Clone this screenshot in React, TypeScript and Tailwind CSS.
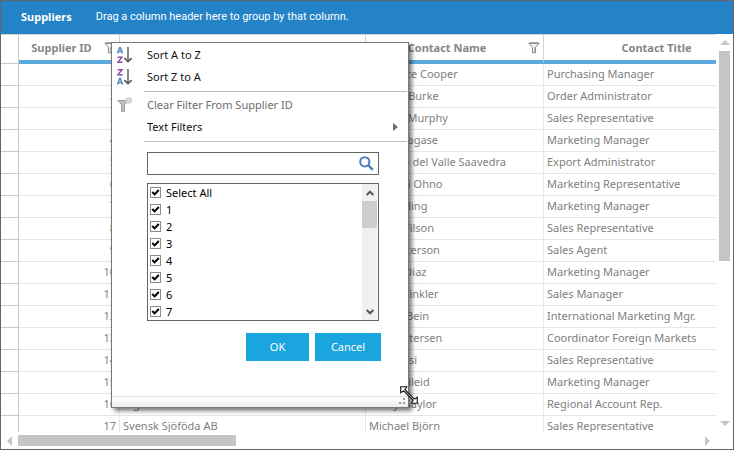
import React from "react";

type Supplier = { id: number; company?: string; contact: string; title: string };

const suppliers: Supplier[] = [
  { id: 1, contact: "Charlotte Cooper", title: "Purchasing Manager" },
  { id: 2, contact: "Shelley Burke", title: "Order Administrator" },
  { id: 3, contact: "Regina Murphy", title: "Sales Representative" },
  { id: 4, contact: "Yoshi Nagase", title: "Marketing Manager" },
  { id: 5, contact: "Antonio del Valle Saavedra", title: "Export Administrator" },
  { id: 6, contact: "Mayumi Ohno", title: "Marketing Representative" },
  { id: 7, contact: "Ian Devling", title: "Marketing Manager" },
  { id: 8, contact: "Peter Wilson", title: "Sales Representative" },
  { id: 9, contact: "Lars Peterson", title: "Sales Agent" },
  { id: 10, contact: "Carlos Diaz", title: "Marketing Manager" },
  { id: 11, contact: "Petra Winkler", title: "Sales Manager" },
  { id: 12, contact: "Martin Bein", title: "International Marketing Mgr." },
  { id: 13, contact: "Sven Petersen", title: "Coordinator Foreign Markets" },
  { id: 14, contact: "Elio Rossi", title: "Sales Representative" },
  { id: 15, contact: "Beate Vileid", title: "Marketing Manager" },
  { id: 16, company: "Bigfoot Breweries", contact: "Cheryl Saylor", title: "Regional Account Rep." },
  { id: 17, company: "Svensk Sjöföda AB", contact: "Michael Björn", title: "Sales Representative" },
];

function FunnelIcon() {
  return (
    <svg width="12" height="12" viewBox="0 0 12 12" fill="none" aria-hidden="true">
      <path d="M.8 1.2H11.2L7.5 5.3V10.8H4.5V5.3Z" fill="#f4f4f6" stroke="#85858f" />
      <path d="M2 1H10" stroke="#74747f" />
      <path d="M6.7 5V10.5" stroke="#a5a5ad" />
    </svg>
  );
}

function SortIcon({ descending = false }: { descending?: boolean }) {
  const a = "M.5 6.5L2.7 .5H3.3L5.5 6.5M1.4 4.6H4.6";
  const z = "M.6 .7H5L.8 5.8H5.5";
  return (
    <svg width="16" height="17" viewBox="0 0 16 17" fill="none" aria-hidden="true">
      <g transform={descending ? "translate(0 9)" : "translate(0 0)"}>
        <path d={a} stroke="#4a83bb" strokeWidth="1.4" />
      </g>
      <g transform={descending ? "translate(0 0)" : "translate(0 9.5)"}>
        <path d={z} stroke="#8b4aa5" strokeWidth="1.4" />
      </g>
      <path d="M11 0V14" stroke="#8a8a8a" strokeWidth="2" />
      <path d="M7.4 11.2L11 14.6L14.6 11.2" stroke="#5c5c5c" strokeWidth="1.8" />
    </svg>
  );
}

function ClearFilterIcon() {
  return (
    <svg width="16" height="16" viewBox="0 0 16 16" fill="none" aria-hidden="true">
      <path d="M.8 3.4H11.2L7.5 7.6V14.4H4.6V7.6Z" fill="#c0c0c0" stroke="#9c9c9c" />
      <circle cx="11.8" cy="3.4" r="3.2" fill="#d0d0d0" />
      <path d="M10.6 2.2L13 4.6M13 2.2L10.6 4.6" stroke="#e4e4e4" />
    </svg>
  );
}

function Triangle({ d, w, h, color }: { d: string; w: number; h: number; color: string }) {
  return (
    <svg width={w} height={h} viewBox={`0 0 ${w} ${h}`} aria-hidden="true">
      <path d={d} fill={color} />
    </svg>
  );
}

function HeaderCell({ label }: { label?: string }) {
  return (
    <th className="h-[29px] border-r border-b-4 border-r-[#d4d4d4] border-b-[#5baadd] p-0 pr-[3px]">
      <div className="flex items-center">
        <span className="flex-1 text-center font-bold text-[#868686]">{label}</span>
        <button type="button" aria-label="Filter column">
          <FunnelIcon />
        </button>
      </div>
    </th>
  );
}

function SupplierTable() {
  const cell = "h-[22px] overflow-hidden border-r border-b border-[#e6e6e6] px-[3px] pt-0 pb-[2px] whitespace-nowrap";
  return (
    <table className="w-[784px] table-fixed border-separate border-spacing-0 text-[11px] leading-4 text-[#808080]">
      <colgroup>
        <col className="w-[18px]" />
        <col className="w-[101px]" />
        <col className="w-[246px]" />
        <col className="w-[178px]" />
        <col />
      </colgroup>
      <thead>
        <tr>
          <td className="border-r border-b border-[#c8c8c8] p-0" />
          <HeaderCell label="Supplier ID" />
          <HeaderCell />
          <HeaderCell label="Contact Name" />
          <HeaderCell label="Contact Title" />
        </tr>
      </thead>
      <tbody>
        {suppliers.map((s) => (
          <tr key={s.id}>
            <td className="h-[22px] border-r border-b border-[#c8c8c8] p-0" />
            <td className={`${cell} text-right`}>{s.id}</td>
            <td className={cell}>{s.company}</td>
            <td className={cell}>{s.contact}</td>
            <td className={cell}>{s.title}</td>
          </tr>
        ))}
      </tbody>
    </table>
  );
}

function FilterOption({ label }: { label: string }) {
  return (
    <label className="flex h-[17px] items-center gap-[5px] pl-[2px]">
      <span className="grid">
        <input
          type="checkbox"
          defaultChecked
          className="peer col-start-1 row-start-1 size-[11px] appearance-none border border-[#8c8c8c] bg-white"
        />
        <svg
          className="pointer-events-none invisible col-start-1 row-start-1 peer-checked:visible"
          width="11"
          height="11"
          viewBox="0 0 11 11"
          fill="none"
          aria-hidden="true"
        >
          <path d="M2.3 5L4.6 7.4L8.8 3" stroke="#000" strokeWidth="2" />
        </svg>
      </span>
      {label}
    </label>
  );
}

function ResizeCursor() {
  return (
    <svg className="absolute -right-[10px] bottom-[3px]" width="18" height="18" viewBox="0 0 18 18" aria-hidden="true">
      <path
        d="M.7 .7H6.8L4.9 3.6L14.4 13.1L17.3 11.2V17.3H11.2L13.1 14.4L3.6 4.9L.7 6.8Z"
        fill="#fff"
        stroke="#111"
        strokeWidth="1.1"
      />
      <path d="M5 5L13 13" stroke="#777" strokeWidth=".6" />
    </svg>
  );
}

function FilterMenu() {
  const item = "flex h-[22px] w-full items-center text-left";
  return (
    <div
      role="dialog"
      aria-label="Filter Supplier ID"
      className="absolute top-[41px] left-[110px] flex h-[366px] w-[298px] flex-col border border-[#777] bg-white text-[11px] leading-4 text-[#111] shadow-[3px_3px_4px_rgba(0,0,0,0.5)]"
    >
      <div className="pt-px">
        <button type="button" className={item}>
          <span className="w-[35px] pl-[5px]"><SortIcon /></span>
          Sort A to Z
        </button>
        <button type="button" className={item}>
          <span className="w-[35px] pl-[5px]"><SortIcon descending /></span>
          Sort Z to A
        </button>
      </div>
      <hr className="mt-[3px] mr-px mb-[2px] ml-8 border-[#bdbdbd]" />
      <button type="button" className={`${item} text-[#6d6d6d]`}>
        <span className="w-[35px] pl-[5px]"><ClearFilterIcon /></span>
        Clear Filter From Supplier ID
      </button>
      <button type="button" className={`${item} justify-between pr-[10px] pl-[35px]`}>
        Text Filters
        <Triangle w={5} h={8} d="M0 0L5 4L0 8Z" color="#6d6d6d" />
      </button>
      <hr className="mt-[3px] mr-px ml-8 border-[#bdbdbd]" />

      <div className="mt-[10px] mr-[29px] ml-[35px] flex h-[23px] items-center border border-[#666]">
        <input type="text" aria-label="Search" className="h-full min-w-0 flex-1 px-1 outline-none" />
        <button type="button" aria-label="Search values" className="pr-1">
          <svg width="15" height="15" viewBox="0 0 15 15" fill="none" aria-hidden="true">
            <circle cx="5.8" cy="5.8" r="4.6" stroke="#4a7fb8" strokeWidth="2" />
            <path d="M9 9L13.8 13.8" stroke="#4a7fb8" strokeWidth="2.4" />
          </svg>
        </button>
      </div>

      <div className="mt-2 mr-[29px] ml-[35px] flex h-[138px] border border-[#666] text-black">
        <div className="flex-1 overflow-hidden">
          {["Select All", "1", "2", "3", "4", "5", "6", "7"].map((v) => (
            <FilterOption key={v} label={v} />
          ))}
        </div>
        <div className="mr-px flex w-[15px] flex-col bg-[#f0f0f0]">
          <button type="button" aria-label="Scroll up" className="flex h-[17px] items-center justify-center">
            <svg width="8" height="6" viewBox="0 0 8 6" fill="none" aria-hidden="true">
              <path d="M.7 5L4 1.7L7.3 5" stroke="#555" strokeWidth="2" />
            </svg>
          </button>
          <div className="h-[27px] bg-[#cdcdcd]" />
          <button type="button" aria-label="Scroll down" className="mt-auto flex h-[17px] items-center justify-center">
            <svg width="8" height="6" viewBox="0 0 8 6" fill="none" aria-hidden="true">
              <path d="M.7 1L4 4.3L7.3 1" stroke="#555" strokeWidth="2" />
            </svg>
          </button>
        </div>
      </div>

      <div className="mt-3 mr-[27px] flex justify-end gap-[6px] text-white">
        <button type="button" className="h-7 w-[63px] bg-[#1ba5de]">OK</button>
        <button type="button" className="h-7 w-[66px] bg-[#1ba5de]">Cancel</button>
      </div>

      <div className="mt-auto flex h-[11px] items-end justify-end border-t border-[#dbe7f0] bg-linear-to-b from-white to-[#ececec] pr-[3px] pb-[2px]">
        <svg width="7" height="7" viewBox="0 0 7 7" fill="#999" aria-hidden="true">
          <path d="M5 0h2v2H5zM5 4h2v2H5zM1 4h2v2H1z" />
        </svg>
      </div>

      <ResizeCursor />
    </div>
  );
}

export default function App() {
  return (
    <main className="relative flex h-screen w-full flex-col overflow-hidden border border-[#666] bg-white font-['Noto_Sans','Open_Sans',sans-serif]">
      <header className="flex h-[33px] shrink-0 items-center gap-6 bg-[#2482c6] pb-[2px] pl-5 text-[11px] leading-4 text-white">
        <h1 className="font-bold">Suppliers</h1>
        <p className="font-['Roboto',sans-serif]">Drag a column header here to group by that column.</p>
      </header>

      <div className="flex min-h-0 flex-1">
        <div className="min-w-0 flex-1 overflow-hidden border-t border-[#d4d4d4]">
          <SupplierTable />
        </div>
        <div className="flex w-[17px] flex-col items-center pt-[6px] pb-[6px]">
          <button type="button" aria-label="Scroll table up">
            <Triangle w={10} h={5} d="M5 0L10 5H0Z" color="#c5c5c5" />
          </button>
          <div className="mt-[6px] h-[210px] w-[11px] bg-[#c5c5c5]" />
          <button type="button" aria-label="Scroll table down" className="mt-auto">
            <Triangle w={10} h={5} d="M0 0H10L5 5Z" color="#c5c5c5" />
          </button>
        </div>
      </div>

      <div className="flex h-[17px] shrink-0 items-center pr-[23px] pl-[6px]">
        <button type="button" aria-label="Scroll table left">
          <Triangle w={5} h={10} d="M5 0V10L0 5Z" color="#c5c5c5" />
        </button>
        <div className="ml-[6px] h-[11px] w-[218px] bg-[#c5c5c5]" />
        <button type="button" aria-label="Scroll table right" className="ml-auto">
          <Triangle w={5} h={10} d="M0 0L5 5L0 10Z" color="#c5c5c5" />
        </button>
      </div>

      <FilterMenu />
    </main>
  );
}
